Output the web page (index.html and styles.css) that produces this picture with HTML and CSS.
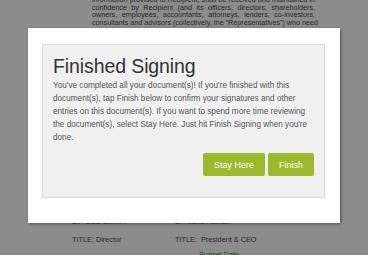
FILE: index.html
```html
<!DOCTYPE html>
<html>
<head>
<meta charset="utf-8">
<link rel="stylesheet" href="styles.css">
</head>
<body>
<div class="doc">
  <div class="doc-text">
    <span class="ln">information provided to Recipient, shall be received and maintained in</span>
    <span class="ln">confidence by Recipient (and its officers, directors, shareholders,</span>
    <span class="ln">owners, employees, accountants, attorneys, lenders, co-investors,</span>
    <span class="ln">consultants and advisors (collectively, the “Representatives”) who need</span>
    <span class="ln">to know the Confidential Information for the purpose of evaluating the</span>
    <span class="ln">Transaction) and shall not be disclosed to any third party without consent.</span>
  </div>
  <div class="sig">
    <div class="cell">BY: BOB SMITH</div>
    <div class="cell">BY: Jane Homan</div>
    <div class="cell">TITLE: Director</div>
    <div class="cell">TITLE:&nbsp; President &amp; CEO</div>
    <div class="cell"></div>
    <div class="cell link">Sunset Date</div>
  </div>
</div>
<div class="overlay">
  <div class="modal">
    <div class="panel">
      <h1 class="title">Finished Signing</h1>
      <p class="msg">You've completed all your document(s)! If you're finished with this<br>document(s), tap Finish below to confirm your signatures and other<br>entries on this document(s). If you want to spend more time reviewing<br>the document(s), select Stay Here. Just hit Finish Signing when you're<br>done.</p>
      <div class="actions">
        <button class="btn btn-stay">Stay Here</button>
        <button class="btn btn-finish">Finish</button>
      </div>
    </div>
  </div>
</div>
</body>
</html>
```
FILE: styles.css
```css
html, body {
  margin: 0;
  padding: 0;
  height: 100%;
  overflow: hidden;
}
body {
  background: #ffffff;
  font-family: "Liberation Sans", Arial, Helvetica, sans-serif;
}
.doc {
  padding-left: 72px;
}
.doc-text {
  width: 223px;
  margin-left: 20px;
  margin-top: -4px;
  font-size: 7.2px;
  line-height: 7.7px;
  color: #4a4a4a;
}
.ln {
  display: block;
  text-align: justify;
  text-align-last: justify;
  white-space: nowrap;
}
.sig {
  margin-top: 175px;
  display: grid;
  grid-template-columns: 103px auto;
  row-gap: 9px;
  font-size: 7.3px;
  line-height: 9px;
  color: #4a4a4a;
}
.cell { height: 9px; }
.link { color: #2f7d2f; padding-left: 24px; margin-top: -3px; }
.overlay {
  position: fixed;
  inset: 0;
  background: rgba(0, 0, 0, 0.45);
  display: flex;
  justify-content: center;
  align-items: flex-start;
  padding-top: 28px;
}
.modal {
  width: 312px;
  box-sizing: border-box;
  background: #ffffff;
  padding: 16px 15px 25px 14px;
  box-shadow: 1px 1px 3px rgba(0, 0, 0, 0.45);
}
.panel {
  background: #f0f0f0;
  border: 1px solid #dcdcdc;
  padding: 10px 10px 20px 10px;
  box-sizing: border-box;
  height: 154px;
}
.title {
  margin: 0;
  font-size: 19.5px;
  line-height: 22px;
  font-weight: normal;
  color: #333333;
  letter-spacing: -0.1px;
}
.msg {
  margin: 2px 0 0 0;
  font-size: 8.2px;
  line-height: 13px;
  color: #555555;
}
.actions {
  display: flex;
  justify-content: flex-end;
  gap: 3px;
  margin-top: 9px;
}
.btn {
  height: 23px;
  border: none;
  border-radius: 2px;
  background: #9db82a;
  color: #ffffff;
  font-family: "Liberation Sans", Arial, Helvetica, sans-serif;
  font-size: 9px;
  padding: 0;
}
.btn-stay { width: 62px; }
.btn-finish { width: 46px; }
```
